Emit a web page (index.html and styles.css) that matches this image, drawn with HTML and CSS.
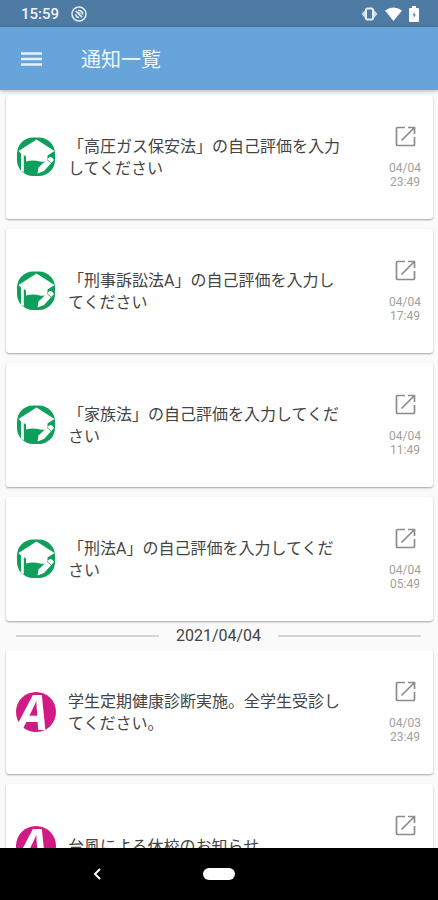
FILE: index.html
```html
<!DOCTYPE html>
<html lang="ja">
<head>
<meta charset="utf-8">
<meta name="viewport" content="width=device-width, initial-scale=1">
<title>通知一覧</title>
<link rel="stylesheet" href="styles.css">
</head>
<body>
<svg class="defs" aria-hidden="true">
  <symbol id="open" viewBox="0 0 21 21">
    <path d="M10 1.500H2.500a1 1 0 0 0-1 1V18.500a1 1 0 0 0 1 1H18.500a1 1 0 0 0 1-1V11M13 1.500h6.500V8M19 2L6.500 14.500" fill="none" stroke="#8c8c8c" stroke-width="1.700"/>
  </symbol>
  <symbol id="study" viewBox="0 0 40 40">
    <rect x="1" y="0.500" width="38" height="38.500" rx="16" fill="#0d9f5b"/>
    <path d="M20.500 2.500L38.500 14L31.500 18.500V23.500Q28 25.500 24 24.500Q17 22.500 10 24.500V19.500L7.800 18V35.500L5 33.500V16.500L2.500 14Z" fill="#fff"/>
    <path d="M32.500 21Q35.500 18.500 38 23L28 34L21.500 36.500L22.500 30.500Z" fill="#fff"/>
    <path d="M31 22.500L35 26" stroke="#0d9f5b" stroke-width="0.800"/>
  </symbol>
  <symbol id="campus" viewBox="0 0 40 40">
    <circle cx="20" cy="20" r="20" fill="#d11a84"/>
    <text class="campus-letter" x="17" y="38" text-anchor="middle">A</text>
  </symbol>
</svg>

<div class="status">
  <div class="status-group">
    <span class="clock">15:59</span>
    <svg width="16" height="16" viewBox="0 0 16 16" fill="none" stroke="#e6edf4" stroke-width="1.500" aria-hidden="true">
      <circle cx="8" cy="8" r="7"/>
      <path d="M4.800 5L11 11.200M4.700 8.500A3.500 3.500 0 0 0 8 11.500M7 4.700A3.500 3.500 0 0 1 11.500 8.700M7 7.500l2.500-.5" stroke-width="1.700"/>
    </svg>
  </div>
  <div class="status-group status-right">
    <svg width="17" height="14" viewBox="0 0 17 14" aria-hidden="true">
      <path d="M4 3L0.500 7L4 11ZM13 3L16.500 7L13 11Z" fill="#cfdbe6"/>
      <rect x="5" y="1.500" width="7" height="11" rx="1.500" fill="none" stroke="#e6edf4" stroke-width="2"/>
    </svg>
    <svg width="17" height="14" viewBox="0 0 17 14" aria-hidden="true"><path d="M0 3.500Q8.500-2.500 17 3.500L8.500 14Z" fill="#fff"/></svg>
    <svg width="10" height="16" viewBox="0 0 10 16" aria-hidden="true">
      <path d="M3 0h4v2h2a1 1 0 0 1 1 1v12a1 1 0 0 1-1 1H1a1 1 0 0 1-1-1V3a1 1 0 0 1 1-1h2z" fill="#fff"/>
      <path d="M5.500 6L3.500 9.200h1.300V12l2-3.500H5.500z" fill="#4d7ba4"/>
    </svg>
  </div>
</div>

<header class="appbar">
  <button class="menu" type="button" aria-label="メニュー">
    <svg width="22" height="16" viewBox="0 0 22 16" aria-hidden="true"><path d="M1 2.500h21M1 8h21M1 13.500h21" stroke="#e8f2fb" stroke-width="2.500"/></svg>
  </button>
  <h1>通知一覧</h1>
</header>

<main class="list">
  <article class="card">
    <svg class="avatar" aria-hidden="true"><use href="#study"/></svg>
    <p class="message">「高圧ガス保安法」の自己評価を入力してください</p>
    <div class="side">
      <a href="#" aria-label="開く"><svg class="open" aria-hidden="true"><use href="#open"/></svg></a>
      <time>04/04<br>23:49</time>
    </div>
  </article>
  <article class="card">
    <svg class="avatar" aria-hidden="true"><use href="#study"/></svg>
    <p class="message">「刑事訴訟法A」の自己評価を入力してください</p>
    <div class="side">
      <a href="#" aria-label="開く"><svg class="open" aria-hidden="true"><use href="#open"/></svg></a>
      <time>04/04<br>17:49</time>
    </div>
  </article>
  <article class="card">
    <svg class="avatar" aria-hidden="true"><use href="#study"/></svg>
    <p class="message">「家族法」の自己評価を入力してください</p>
    <div class="side">
      <a href="#" aria-label="開く"><svg class="open" aria-hidden="true"><use href="#open"/></svg></a>
      <time>04/04<br>11:49</time>
    </div>
  </article>
  <article class="card">
    <svg class="avatar" aria-hidden="true"><use href="#study"/></svg>
    <p class="message">「刑法A」の自己評価を入力してください</p>
    <div class="side">
      <a href="#" aria-label="開く"><svg class="open" aria-hidden="true"><use href="#open"/></svg></a>
      <time>04/04<br>05:49</time>
    </div>
  </article>
  <h2 class="divider">2021/04/04</h2>
  <article class="card">
    <svg class="avatar" aria-hidden="true"><use href="#campus"/></svg>
    <p class="message">学生定期健康診断実施。全学生受診してください。</p>
    <div class="side">
      <a href="#" aria-label="開く"><svg class="open" aria-hidden="true"><use href="#open"/></svg></a>
      <time>04/03<br>23:49</time>
    </div>
  </article>
  <article class="card">
    <svg class="avatar" aria-hidden="true"><use href="#campus"/></svg>
    <p class="message">台風による休校のお知らせ</p>
    <div class="side">
      <a href="#" aria-label="開く"><svg class="open" aria-hidden="true"><use href="#open"/></svg></a>
      <time>04/03<br>17:49</time>
    </div>
  </article>
</main>

<nav class="system">
  <button class="back" type="button" aria-label="戻る"><svg width="8" height="12" viewBox="0 0 8 12" aria-hidden="true"><path d="M7 1L2 6l5 5" fill="none" stroke="#fff" stroke-width="2"/></svg></button>
  <button class="home" type="button" aria-label="ホーム"></button>
</nav>
</body>
</html>
```
FILE: styles.css
```css
* {
  box-sizing: border-box;
}

body {
  margin: 0;
  height: 100vh;
  display: flex;
  flex-direction: column;
  background: #fafafa;
  color: #444;
  font-family: Roboto, "Noto Sans CJK JP", sans-serif;
  font-size: 16px;
}

button {
  display: flex;
  padding: 0;
  border: 0;
  background: none;
}

.defs {
  display: none;
}

.status {
  flex: none;
  display: flex;
  justify-content: space-between;
  height: 27px;
  padding: 0 19px 0 21px;
  background: #4d7ba4;
}

.status-group {
  display: flex;
  align-items: center;
  gap: 12px;
}

.status-right {
  gap: 7px;
}

.clock {
  color: #f0f4f8;
  font-size: 15px;
  font-weight: 500;
}

.appbar {
  flex: none;
  z-index: 1;
  display: flex;
  align-items: center;
  gap: 39px;
  height: 63px;
  padding: 0 20px;
  background: #67a4da;
  box-shadow: 0 1px 4px rgba(0, 0, 0, 0.3);
}

.appbar h1 {
  margin: 0;
  padding-top: 2px;
  color: #eef6fd;
  font-size: 20px;
  font-weight: 400;
  line-height: 28px;
}

.list {
  flex: 1;
  min-height: 0;
  padding: 5px 5px 0 6px;
  overflow-y: auto;
  scrollbar-width: none;
}

.card {
  display: flex;
  align-items: center;
  gap: 12px;
  min-height: 124px;
  padding: 0 12px 0 10px;
  background: #fff;
  border-radius: 3px;
  box-shadow: 0 1px 2px rgba(0, 0, 0, 0.35);
}

.card + .card {
  margin-top: 10px;
}

.avatar {
  flex: none;
  width: 40px;
  height: 40px;
}

.campus-letter {
  fill: #fff;
  font-family: "Open Sans", sans-serif;
  font-size: 49px;
  font-style: italic;
  font-weight: 700;
}

.message {
  flex: 1;
  margin: 0 32px 0 0;
  padding-top: 2px;
  line-height: 22px;
}

.side {
  flex: none;
  display: flex;
  flex-direction: column;
  align-items: center;
  gap: 14px;
  color: #a0a0a0;
  font-size: 12px;
  line-height: 14px;
  text-align: center;
}

.side a {
  display: flex;
}

.open {
  width: 21px;
  height: 21px;
}

.divider {
  display: flex;
  align-items: center;
  gap: 17px;
  margin: 0;
  padding: 0 12px 0 10px;
  font-size: 16px;
  font-weight: 400;
  line-height: 29px;
}

.divider::before,
.divider::after {
  content: "";
  flex: 1;
  height: 2px;
  background: #d4d4d4;
}

.system {
  flex: none;
  z-index: 1;
  display: grid;
  grid-template-columns: 1fr auto 1fr;
  align-items: center;
  justify-items: center;
  height: 52px;
  background: #000;
}

.back {
  margin-right: 10px;
}

.home {
  width: 32px;
  height: 12px;
  border-radius: 6px;
  background: #fff;
}
```
